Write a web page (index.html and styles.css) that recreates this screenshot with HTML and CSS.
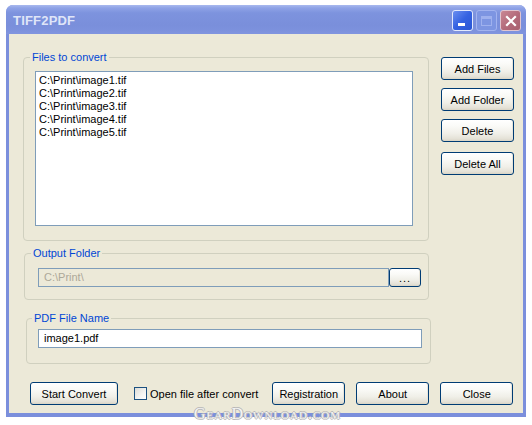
FILE: index.html
```html
<!DOCTYPE html>
<html>
<head>
<meta charset="utf-8">
<title>TIFF2PDF</title>
<link rel="stylesheet" href="styles.css">
</head>
<body>
<div class="window">
  <div class="titlebar">
    <span class="title">TIFF2PDF</span>
    <div class="caption-btns">
      <span class="cb cb-min"><span class="min-bar"></span></span>
      <span class="cb cb-max"><span class="max-box"></span></span>
      <span class="cb cb-close">
        <svg width="14" height="14" viewBox="0 0 14 14"><path d="M3 3 L11 11 M11 3 L3 11" stroke="#fff" stroke-width="2.2" stroke-linecap="square"/></svg>
      </span>
    </div>
  </div>
  <div class="client">
    <div class="top">
      <div class="groups">
        <fieldset class="grp grp-files">
          <legend>Files to convert</legend>
          <div class="listbox">
            <div class="item">C:\Print\image1.tif</div>
            <div class="item">C:\Print\image2.tif</div>
            <div class="item">C:\Print\image3.tif</div>
            <div class="item">C:\Print\image4.tif</div>
            <div class="item">C:\Print\image5.tif</div>
          </div>
        </fieldset>
        <fieldset class="grp grp-output">
          <legend>Output Folder</legend>
          <div class="row">
            <div class="edit edit-disabled">C:\Print\</div>
            <button class="btn btn-browse">...</button>
          </div>
        </fieldset>
        <fieldset class="grp grp-pdf">
          <legend>PDF File Name</legend>
          <div class="edit edit-pdf">image1.pdf</div>
        </fieldset>
      </div>
      <div class="side">
        <button class="btn btn-side">Add Files</button>
        <button class="btn btn-side">Add Folder</button>
        <button class="btn btn-side">Delete</button>
        <button class="btn btn-side btn-delall">Delete All</button>
      </div>
    </div>
    <div class="bottom">
      <button class="btn btn-start">Start Convert</button>
      <label class="check"><span class="box"></span><span>Open file after convert</span></label>
      <button class="btn btn-bot btn-reg">Registration</button>
      <button class="btn btn-bot btn-about">About</button>
      <button class="btn btn-bot btn-close">Close</button>
    </div>
  </div>
</div>
<div class="watermark">GearDownload.com</div>
</body>
</html>
```
FILE: styles.css
```css
html, body {
  margin: 0;
  padding: 0;
  background: #fff;
}
body {
  position: relative;
  width: 532px;
  height: 425px;
  overflow: hidden;
  font-family: "Liberation Sans", Arial, sans-serif;
  font-size: 11px;
  color: #000;
}
.window {
  position: absolute;
  left: 6px;
  top: 5px;
  width: 520px;
  height: 412px;
  box-sizing: border-box;
  padding: 0 3px 4px 3px;
  background: #7b8fdc;
  border-radius: 7px 7px 0 0;
  display: flex;
  flex-direction: column;
}
.titlebar {
  height: 29px;
  margin: 0 -3px;
  border-radius: 7px 7px 0 0;
  background: linear-gradient(#a9b9ee 0px, #8ea2e6 3px, #7d93de 8px, #7a8fdb 20px, #7d92dd 26px, #8195df 29px);
  display: flex;
  align-items: center;
  flex-shrink: 0;
}
.title {
  margin-left: 7px;
  margin-top: 1px;
  font-family: "Liberation Sans", Arial, sans-serif;
  font-weight: bold;
  font-size: 13px;
  color: #dfe5f8;
  letter-spacing: 0.2px;
}
.caption-btns {
  margin-left: auto;
  margin-right: 5px;
  display: flex;
  gap: 3px;
  margin-top: 2px;
}
.cb {
  width: 19px;
  height: 19px;
  border: 1px solid #c9d4f7;
  border-radius: 3px;
  box-sizing: content-box;
  position: relative;
  display: flex;
  align-items: center;
  justify-content: center;
}
.cb-min {
  background: linear-gradient(135deg, #6b8ff0, #3462e2 50%, #2a56d4);
  border-color: #e2e9fd;
}
.min-bar {
  position: absolute;
  left: 5px;
  top: 12px;
  width: 7px;
  height: 3px;
  background: #fff;
}
.cb-max {
  background: #7d95e2;
  border-color: #a2b3ef;
}
.max-box {
  width: 11px;
  height: 10px;
  border: 1px solid #9fb1ee;
  border-top-width: 3px;
  box-sizing: border-box;
}
.cb-close {
  background: linear-gradient(135deg, #c98794, #b36a7a 55%, #a8606f);
  border-color: #e0c5d0;
}
.client {
  flex: 1;
  background: #ece9d8;
  position: relative;
}
.top {
  display: flex;
}
.groups {
  width: 432px;
  padding-top: 17px;
  flex-shrink: 0;
}
.grp {
  border: 1px solid #d0d0bf;
  border-radius: 4px;
  margin: 0;
  box-sizing: border-box;
  min-width: 0;
}
.grp legend {
  color: #0046d5;
  font-size: 11px;
  line-height: 13px;
  padding: 0 2px;
}
.grp-files {
  margin-left: 14px;
  width: 406px;
  padding: 7px 14px 14px 11px;
}
.grp-files legend {
  margin-left: -5px;
}
.listbox {
  width: 378px;
  height: 155px;
  box-sizing: border-box;
  background: #fff;
  border: 1px solid #7f9db9;
  padding: 2px 3px;
}
.item {
  line-height: 13px;
  height: 13px;
  white-space: nowrap;
}
.grp-output {
  margin-left: 15px;
  margin-top: 6px;
  width: 405px;
  padding: 8px 5px 12px 13px;
}
.grp-output legend {
  margin-left: -7px;
}
.row {
  display: flex;
  align-items: flex-start;
}
.edit {
  height: 19px;
  box-sizing: border-box;
  border: 1px solid #7f9db9;
  padding: 0 5px;
  line-height: 17px;
  white-space: nowrap;
}
.edit-disabled {
  width: 351px;
  background: #ece9d8;
  color: #aca899;
}
.btn-browse {
  margin-left: 2px;
  margin-top: 1px;
  width: 32px;
  height: 19px;
  line-height: 14px;
  letter-spacing: 1px;
}
.grp-pdf {
  margin-left: 17px;
  margin-top: 12px;
  width: 405px;
  padding: 4px 8px 15px 11px;
}
.grp-pdf legend {
  margin-left: -6px;
}
.edit-pdf {
  width: 384px;
  background: #fff;
}
.side {
  display: flex;
  flex-direction: column;
  padding-top: 23px;
  gap: 8px;
}
.btn {
  font-family: "Liberation Sans", Arial, sans-serif;
  font-size: 11px;
  color: #000;
  border: 1px solid #003c74;
  border-radius: 3px;
  background: linear-gradient(#ffffff 0%, #fafaf7 30%, #f0efe8 65%, #e4e1d6 90%, #d8d3c6 100%);
  box-shadow: inset 0 -1px 0 #dcd7c8, inset -1px 0 0 #e8e5da;
  padding: 0;
  margin: 0;
  box-sizing: border-box;
  cursor: default;
}
.btn-side {
  width: 73px;
  height: 23px;
}
.btn-delall {
  margin-top: 2px;
}
.bottom {
  position: absolute;
  left: 0;
  top: 348px;
  display: flex;
  align-items: center;
}
.btn-start {
  margin-left: 21px;
  width: 88px;
  height: 23px;
}
.check {
  margin-left: 16px;
  display: flex;
  align-items: center;
  gap: 3px;
}
.box {
  width: 13px;
  height: 13px;
  box-sizing: border-box;
  border: 1px solid #1c5180;
  background: linear-gradient(135deg, #dcdcd7, #f4f4f1 60%, #ffffff);
}
.btn-bot {
  width: 73px;
  height: 23px;
}
.btn-reg {
  margin-left: 14px;
}
.btn-about {
  margin-left: 11px;
}
.btn-close {
  margin-left: 11px;
}
.watermark {
  position: absolute;
  left: 194px;
  top: 405px;
  font-family: "Liberation Serif", serif;
  font-variant: small-caps;
  font-size: 16px;
  letter-spacing: 1px;
  color: #f4f4f4;
  text-shadow: 1px 0 0 #b8b8b8, -1px 0 0 #b8b8b8, 0 1px 0 #b8b8b8, 0 -1px 0 #b8b8b8;
}
```
